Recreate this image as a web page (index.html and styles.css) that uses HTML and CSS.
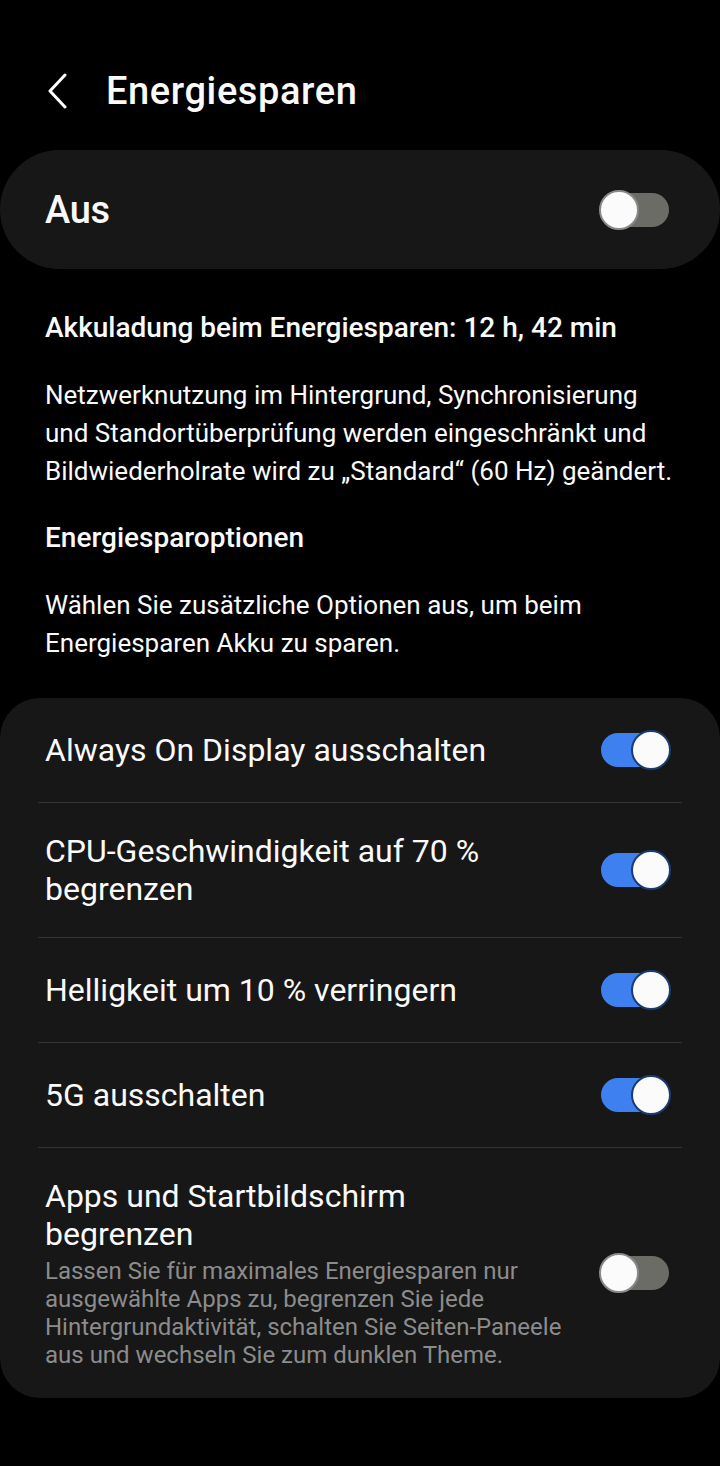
FILE: index.html
```html
<!DOCTYPE html>
<html lang="de">
<head>
<meta charset="utf-8">
<link rel="stylesheet" href="styles.css">
</head>
<body>
<div class="screen">
  <header class="topbar">
    <svg class="back" width="24" height="36" viewBox="0 0 24 36"><path d="M19 2 L4 18 L19 34" fill="none" stroke="#fff" stroke-width="3" stroke-linecap="round" stroke-linejoin="round"/></svg>
    <h1 class="title">Energiesparen</h1>
  </header>

  <section class="master">
    <span class="master-label">Aus</span>
    <span class="toggle off"><span class="thumb"></span></span>
  </section>

  <div class="info">
    <p class="strong">Akkuladung beim Energiesparen: 12 h, 42 min</p>
    <p class="body">Netzwerknutzung im Hintergrund, Synchronisierung<br>und Standortüberprüfung werden eingeschränkt und<br>Bildwiederholrate wird zu „Standard“ (60 Hz) geändert.</p>
    <p class="strong">Energiesparoptionen</p>
    <p class="body">Wählen Sie zusätzliche Optionen aus, um beim<br>Energiesparen Akku zu sparen.</p>
  </div>

  <section class="card">
    <div class="row">
      <div class="row-text"><div class="row-title">Always On Display ausschalten</div></div>
      <span class="toggle on"><span class="thumb"></span></span>
    </div>
    <div class="divider"></div>
    <div class="row">
      <div class="row-text"><div class="row-title">CPU-Geschwindigkeit auf 70 %<br>begrenzen</div></div>
      <span class="toggle on"><span class="thumb"></span></span>
    </div>
    <div class="divider"></div>
    <div class="row">
      <div class="row-text"><div class="row-title">Helligkeit um 10 % verringern</div></div>
      <span class="toggle on"><span class="thumb"></span></span>
    </div>
    <div class="divider"></div>
    <div class="row">
      <div class="row-text"><div class="row-title">5G ausschalten</div></div>
      <span class="toggle on"><span class="thumb"></span></span>
    </div>
    <div class="divider"></div>
    <div class="row">
      <div class="row-text">
        <div class="row-title">Apps und Startbildschirm<br>begrenzen</div>
        <div class="row-sub">Lassen Sie für maximales Energiesparen nur<br>ausgewählte Apps zu, begrenzen Sie jede<br>Hintergrundaktivität, schalten Sie Seiten-Paneele<br>aus und wechseln Sie zum dunklen Theme.</div>
      </div>
      <span class="toggle off"><span class="thumb"></span></span>
    </div>
  </section>
</div>
</body>
</html>
```

FILE: styles.css
```css
* { box-sizing: border-box; }
html, body {
  margin: 0;
  padding: 0;
  background: #000;
}
body {
  font-family: Roboto, "Noto Sans", "Liberation Sans", sans-serif;
  color: #fafafa;
}
.screen {
  width: 720px;
  height: 1466px;
  background: #000;
  overflow: hidden;
}
.topbar {
  display: flex;
  align-items: center;
  height: 150px;
  padding: 32px 0 0 46px;
}
.back {
  display: block;
  margin-right: 36px;
}
.title {
  margin: 0;
  font-size: 38px;
  font-weight: 500;
  letter-spacing: 0.6px;
  line-height: 44px;
}
.master {
  height: 119px;
  background: #171717;
  border-radius: 60px;
  display: flex;
  align-items: center;
  justify-content: space-between;
  padding: 0 50px 0 45px;
}
.master-label {
  font-size: 38px;
  font-weight: 500;
  letter-spacing: -0.3px;
}
.info {
  padding: 40px 20px 0 45px;
}
.info p {
  margin: 0 0 29px 0;
  font-size: 26px;
  line-height: 38px;
  white-space: nowrap;
}
.info .strong {
  font-size: 28px;
  font-weight: 500;
}
.info .body:last-child {
  margin-bottom: 36px;
}
.card {
  background: #171717;
  border-radius: 40px;
}
.row {
  display: flex;
  align-items: center;
  justify-content: space-between;
  min-height: 104px;
  padding: 29px 50px 29px 45px;
}
.row-text {
  flex: 1;
  padding-right: 20px;
  white-space: nowrap;
}
.row-title {
  font-size: 32px;
  line-height: 38px;
  color: #fafafa;
}
.row-sub {
  margin-top: 4px;
  font-size: 24px;
  line-height: 28px;
  color: #8c8c8c;
}
.divider {
  height: 1px;
  background: #343434;
  margin: 0 38px 0 38px;
}
.toggle {
  position: relative;
  flex: none;
  width: 70px;
  height: 40px;
  display: block;
}
.toggle::before {
  content: "";
  position: absolute;
  left: 1px;
  right: 1px;
  top: 3px;
  bottom: 3px;
  border-radius: 17px;
}
.toggle.off::before { background: #6c6c67; }
.toggle.on::before { background: #3f80f0; }
.thumb {
  position: absolute;
  top: 0;
  width: 40px;
  height: 40px;
  border-radius: 50%;
  background: #fbfbfb;
}
.toggle.off .thumb {
  left: -1px;
  border: 2px solid #8a8a8a;
}
.toggle.on .thumb {
  right: -1px;
  border: 2px solid #1d3b6e;
}
```
